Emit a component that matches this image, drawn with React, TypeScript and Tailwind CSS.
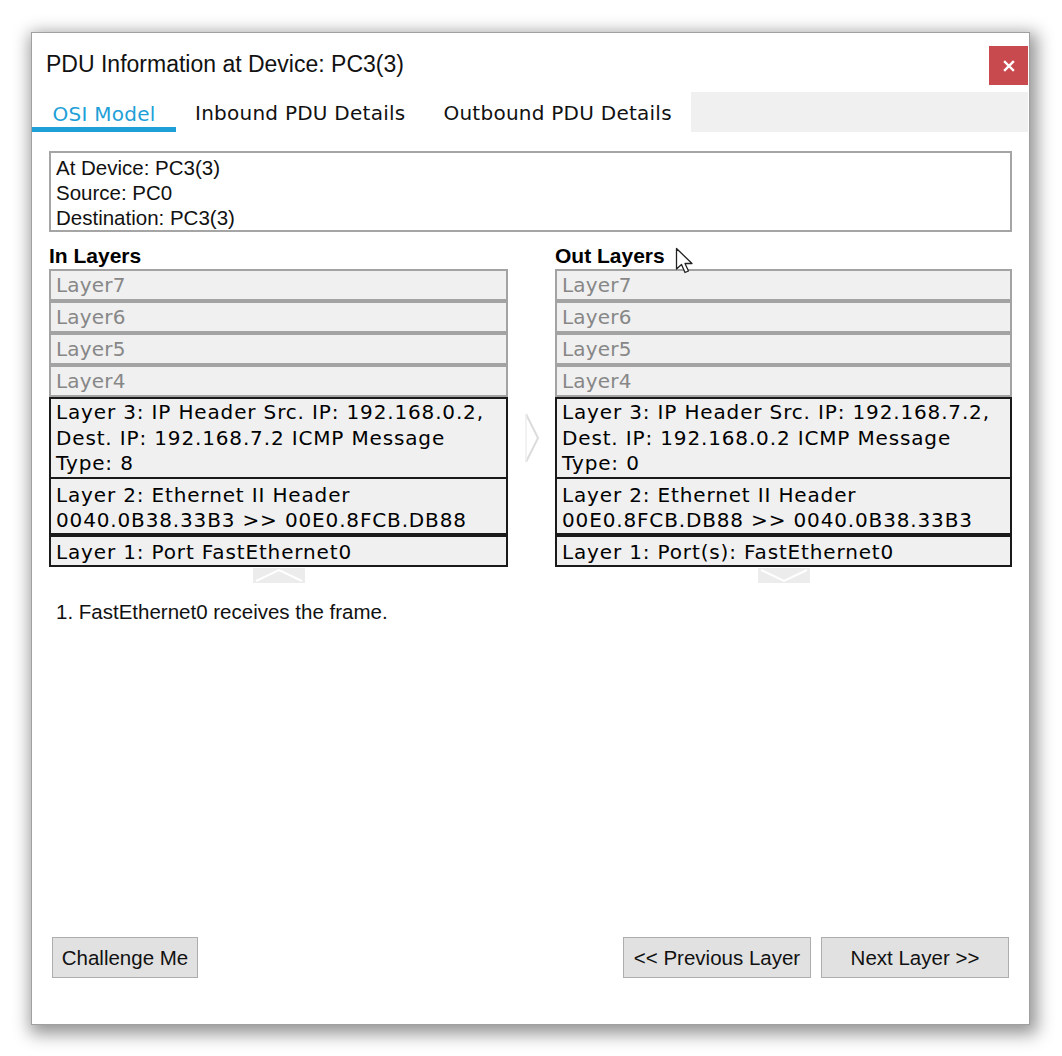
import React from "react"

const arial = "font-['Liberation_Sans',Arial,sans-serif]"
const verdana = "font-['DejaVu_Sans',Verdana,sans-serif]"

type Side = {
  title: string
  l3: string[]
  l2: string[]
  l1: string
  arrow: "up" | "down"
}

const sides: Side[] = [
  {
    title: "In Layers",
    l3: ["Layer 3: IP Header Src. IP: 192.168.0.2,", "Dest. IP: 192.168.7.2 ICMP Message", "Type: 8"],
    l2: ["Layer 2: Ethernet II Header", "0040.0B38.33B3 >> 00E0.8FCB.DB88"],
    l1: "Layer 1: Port FastEthernet0",
    arrow: "up",
  },
  {
    title: "Out Layers",
    l3: ["Layer 3: IP Header Src. IP: 192.168.7.2,", "Dest. IP: 192.168.0.2 ICMP Message", "Type: 0"],
    l2: ["Layer 2: Ethernet II Header", "00E0.8FCB.DB88 >> 0040.0B38.33B3"],
    l1: "Layer 1: Port(s): FastEthernet0",
    arrow: "down",
  },
]

function LayerColumn({ side }: { side: Side }) {
  return (
    <div className="flex flex-col">
      <div className={`${arial} h-[37px] pt-[12px] text-[21px] font-bold leading-[24px] text-black`}>{side.title}</div>
      {["Layer7", "Layer6", "Layer5", "Layer4"].map((l) => (
        <div
          key={l}
          className={`${verdana} h-[32px] border-2 border-[#a3a3a3] bg-[#f0f0f0] pl-[5px] text-[20px] leading-[29px] tracking-[0.2px] text-[#878787]`}
        >
          {l}
        </div>
      ))}
      <div className={`${verdana} h-[82px] border-2 border-[#1a1a1a] bg-[#f0f0f0] pl-[5px] pt-[1px] text-[20px] leading-[25.5px] tracking-[0.85px] text-black`}>
        {side.l3.map((t) => (
          <div key={t} className="whitespace-nowrap">{t}</div>
        ))}
      </div>
      <div className={`${verdana} h-[56px] border-2 border-t-0 border-[#1a1a1a] bg-[#f0f0f0] pl-[5px] pt-[4px] text-[20px] leading-[25px] tracking-[0.85px] text-black`}>
        {side.l2.map((t) => (
          <div key={t} className="whitespace-nowrap">{t}</div>
        ))}
      </div>
      <div className={`${verdana} h-[32px] border-2 border-[#1a1a1a] bg-[#f0f0f0] pl-[5px] text-[20px] leading-[30px] tracking-[0.85px] text-black`}>
        {side.l1}
      </div>
      <div className="mx-auto mt-[1px] h-[15px] w-[52px] bg-[#ececec]">
        <svg width="52" height="15" viewBox="0 0 52 15">
          {side.arrow === "up" ? (
            <polyline points="3,13 26,2 49,13" fill="none" stroke="#ffffff" strokeWidth="2" />
          ) : (
            <polyline points="3,2 26,13 49,2" fill="none" stroke="#ffffff" strokeWidth="2" />
          )}
        </svg>
      </div>
    </div>
  )
}

function Button({ label, w }: { label: string; w: string }) {
  return (
    <button
      className={`${arial} ${w} h-[41px] border border-[#adadad] bg-[#e1e1e1] text-[20.5px] leading-[24px] text-[#111]`}
    >
      {label}
    </button>
  )
}

export default function App() {
  return (
    <div className="relative h-[1056px] w-[1062px] overflow-hidden bg-white pl-[31px] pt-[32px]">
      <div className="flex h-[993px] w-[999px] flex-col border border-[#a0a0a0] bg-white shadow-[3px_5px_16px_4px_rgba(0,0,0,0.42)]">
        {/* title bar */}
        <div className="flex h-[59px] items-start justify-between">
          <div className={`${arial} pl-[14px] pt-[17px] text-[23px] leading-[28px] text-[#111]`}>
            PDU Information at Device: PC3(3)
          </div>
          <button className="mr-[1px] mt-[13px] flex h-[39px] w-[39px] items-center justify-center bg-[#c94a4e]">
            <svg width="12" height="12" viewBox="0 0 12 12">
              <path d="M2 2 L10 10 M10 2 L2 10" stroke="#fff" strokeWidth="2.4" strokeLinecap="square" />
            </svg>
          </button>
        </div>

        {/* tabs */}
        <div className={`${verdana} flex h-[40px] text-[20px] leading-[24px] tracking-[0.25px]`}>
          <div className="flex w-[144px] items-center justify-center border-b-[5px] border-[#1e9fd8] pt-[8px] text-[#1e9fd8]">
            OSI Model
          </div>
          <div className="flex items-center px-[19px] pt-[2px] text-[#111]">Inbound PDU Details</div>
          <div className="flex items-center px-[19px] pt-[2px] text-[#111]">Outbound PDU Details</div>
          <div className="mr-[1px] flex-1 bg-[#f0f0f0]" />
        </div>

        <div className="flex flex-1 flex-col px-[17px]">
          {/* info box */}
          <div className={`${arial} mt-[19px] h-[81px] border-2 border-[#a5a5a5] pl-[5px] pt-[2px] text-[20.5px] leading-[25px] text-[#111]`}>
            <div>At Device: PC3(3)</div>
            <div>Source: PC0</div>
            <div>Destination: PC3(3)</div>
          </div>

          {/* layers */}
          <div className="grid grid-cols-[459px_47px_457px]">
            <LayerColumn side={sides[0]} />
            <div className="flex justify-center pt-[180px]">
              <svg width="20" height="52" viewBox="0 0 20 52">
                <path d="M4 2 L16 26 L4 50" fill="none" stroke="#dcdcdc" strokeWidth="2" />
                <path d="M4 2 L4 50" fill="none" stroke="#eeeeee" strokeWidth="1.5" />
              </svg>
            </div>
            <LayerColumn side={sides[1]} />
          </div>

          <div className={`${arial} mt-[17px] pl-[7px] text-[20.5px] leading-[24px] text-[#111]`}>
            1. FastEthernet0 receives the frame.
          </div>

          {/* buttons */}
          <div className="mt-auto flex items-center justify-between pb-[46px] pl-[3px] pr-[3px]">
            <Button label="Challenge Me" w="w-[146px]" />
            <div className="flex gap-[10px]">
              <Button label="<< Previous Layer" w="w-[188px]" />
              <Button label="Next Layer >>" w="w-[188px]" />
            </div>
          </div>
        </div>
      </div>

      {/* mouse pointer */}
      <svg className="absolute left-[675px] top-[247px]" width="22" height="30" viewBox="0 0 22 30">
        <path
          d="M1.5 1.5 L1.5 22 L6.5 17.5 L10 25.5 L13.5 24 L10 16.5 L17 16.5 Z"
          fill="#fff"
          stroke="#222"
          strokeWidth="1.3"
          strokeLinejoin="round"
        />
      </svg>
    </div>
  )
}
